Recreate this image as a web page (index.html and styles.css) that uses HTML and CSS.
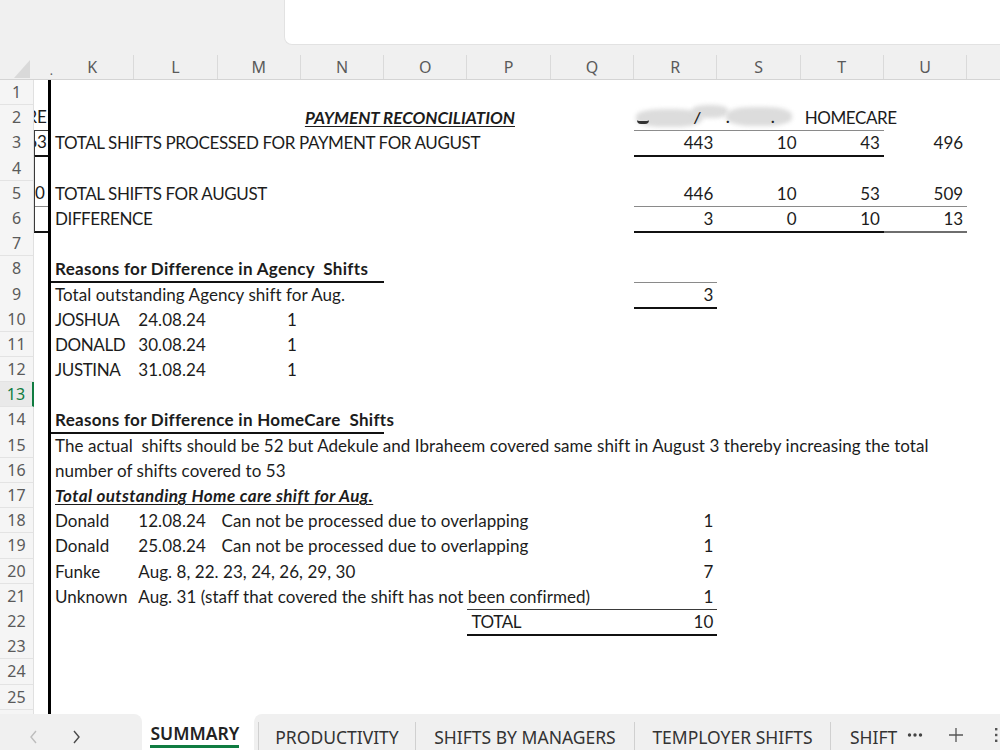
FILE: index.html
```html
<!DOCTYPE html>
<html lang="en">
<head>
    <meta charset="UTF-8">
    <title>SUMMARY - Payment Reconciliation</title>
    <link rel="stylesheet" href="styles.css">
</head>
<body>
    <div class="topbar">
        <div class="formula-box"></div>
    </div>

    <div class="colhead">
        <div class="corner">
            <svg width="34" height="24" viewBox="0 0 34 24"><polygon points="30,5 30,23 14,23" fill="#d9d9d9"/></svg>
        </div>
        <div class="ch ch-j"><span class="ch-dot">.</span></div>
        <div class="ch">K</div>
        <div class="ch">L</div>
        <div class="ch">M</div>
        <div class="ch">N</div>
        <div class="ch">O</div>
        <div class="ch">P</div>
        <div class="ch">Q</div>
        <div class="ch">R</div>
        <div class="ch">S</div>
        <div class="ch">T</div>
        <div class="ch">U</div>
        <div class="ch"></div>
    </div>

    <div class="sheet">
        <div class="row"><div class="rh">1</div><div class="c j"></div></div>
        <div class="row">
            <div class="rh">2</div>
            <div class="c j j-text bl-dark">RE</div>
            <div class="c n bold-title italic underline">PAYMENT RECONCILIATION</div>
            <div class="c r b-thin">
                <div class="smudge smudge-a"></div>
                <div class="smudge smudge-b"></div>
                <div class="smudge smudge-c"></div>
                <span class="ink ink-1"></span>
                <span class="ink ink-2">/</span>
                <span class="ink ink-3">.</span>
                <span class="ink ink-4">.</span>
            </div>
            <div class="c s b-thin"></div>
            <div class="c t caps b-thin">HOMECARE</div>
        </div>
        <div class="row">
            <div class="rh">3</div>
            <div class="c j j-text j-left b-black">63</div>
            <div class="c k caps">TOTAL SHIFTS PROCESSED FOR PAYMENT FOR AUGUST</div>
            <div class="c r num b-black">443</div>
            <div class="c s num b-black">10</div>
            <div class="c t num b-black">43</div>
            <div class="c u num">496</div>
        </div>
        <div class="row"><div class="rh">4</div><div class="c j j-left"></div></div>
        <div class="row">
            <div class="rh">5</div>
            <div class="c j j-text j-left b-thin">0</div>
            <div class="c k caps">TOTAL SHIFTS FOR AUGUST</div>
            <div class="c r num b-thin">446</div>
            <div class="c s num b-thin">10</div>
            <div class="c t num b-thin">53</div>
            <div class="c u num b-thin">509</div>
        </div>
        <div class="row">
            <div class="rh">6</div>
            <div class="c j j-left b-black"></div>
            <div class="c k caps">DIFFERENCE</div>
            <div class="c r num b-black">3</div>
            <div class="c s num b-black">0</div>
            <div class="c t num b-black">10</div>
            <div class="c u num b-grey">13</div>
        </div>
        <div class="row"><div class="rh">7</div><div class="c j"></div></div>
        <div class="row">
            <div class="rh">8</div>
            <div class="c j"></div>
            <div class="c k bold b-black">Reasons for Difference in Agency&nbsp; Shifts</div>
            <div class="c l b-black"></div>
            <div class="c m b-black"></div>
            <div class="c n b-black"></div>
            <div class="c r b-thin"></div>
        </div>
        <div class="row">
            <div class="rh">9</div>
            <div class="c j"></div>
            <div class="c k">Total outstanding Agency shift for Aug.</div>
            <div class="c r num b-black">3</div>
        </div>
        <div class="row">
            <div class="rh">10</div>
            <div class="c j"></div>
            <div class="c k caps">JOSHUA</div>
            <div class="c l">24.08.24</div>
            <div class="c m num">1</div>
        </div>
        <div class="row">
            <div class="rh">11</div>
            <div class="c j"></div>
            <div class="c k caps">DONALD</div>
            <div class="c l">30.08.24</div>
            <div class="c m num">1</div>
        </div>
        <div class="row">
            <div class="rh">12</div>
            <div class="c j"></div>
            <div class="c k caps">JUSTINA</div>
            <div class="c l">31.08.24</div>
            <div class="c m num">1</div>
        </div>
        <div class="row"><div class="rh rh-active">13</div><div class="c j"></div></div>
        <div class="row">
            <div class="rh">14</div>
            <div class="c j"></div>
            <div class="c k bold b-black">Reasons for Difference in HomeCare&nbsp; Shifts</div>
            <div class="c l b-black"></div>
            <div class="c m b-black"></div>
            <div class="c n b-black"></div>
        </div>
        <div class="row">
            <div class="rh">15</div>
            <div class="c j"></div>
            <div class="c k">The actual&nbsp; shifts should be 52 but Adekule and Ibraheem covered same shift in August 3 thereby increasing the total</div>
        </div>
        <div class="row">
            <div class="rh">16</div>
            <div class="c j"></div>
            <div class="c k">number of shifts covered to 53</div>
        </div>
        <div class="row">
            <div class="rh">17</div>
            <div class="c j"></div>
            <div class="c k bold-title italic underline">Total outstanding Home care shift for Aug.</div>
        </div>
        <div class="row">
            <div class="rh">18</div>
            <div class="c j"></div>
            <div class="c k">Donald</div>
            <div class="c l">12.08.24</div>
            <div class="c m">Can not be processed due to overlapping</div>
            <div class="c r num">1</div>
        </div>
        <div class="row">
            <div class="rh">19</div>
            <div class="c j"></div>
            <div class="c k">Donald</div>
            <div class="c l">25.08.24</div>
            <div class="c m">Can not be processed due to overlapping</div>
            <div class="c r num">1</div>
        </div>
        <div class="row">
            <div class="rh">20</div>
            <div class="c j"></div>
            <div class="c k">Funke</div>
            <div class="c l">Aug. 8, 22. 23, 24, 26, 29, 30</div>
            <div class="c r num">7</div>
        </div>
        <div class="row">
            <div class="rh">21</div>
            <div class="c j"></div>
            <div class="c k">Unknown</div>
            <div class="c l">Aug. 31 (staff that covered the shift has not been confirmed)</div>
            <div class="c p b-dark"></div>
            <div class="c q b-dark"></div>
            <div class="c r num b-dark">1</div>
        </div>
        <div class="row">
            <div class="rh">22</div>
            <div class="c j"></div>
            <div class="c p caps b-black">TOTAL</div>
            <div class="c q b-black"></div>
            <div class="c r num b-black">10</div>
        </div>
        <div class="row"><div class="rh">23</div><div class="c j"></div></div>
        <div class="row"><div class="rh">24</div><div class="c j"></div></div>
        <div class="row"><div class="rh">25</div><div class="c j"></div></div>
        <div class="row"><div class="rh"></div><div class="c j"></div></div>
    </div>

    <div class="tabbar">
        <div class="tab-nav">
            <svg class="nav-icon" width="10" height="14" viewBox="0 0 10 14"><polyline points="7,1 2,7 7,13" fill="none" stroke="#bdbdbd" stroke-width="1.4"/></svg>
            <svg class="nav-icon" width="10" height="14" viewBox="0 0 10 14"><polyline points="3,1 8,7 3,13" fill="none" stroke="#4a4a4a" stroke-width="1.4"/></svg>
        </div>
        <div class="tab-active"><span class="tab-active-label">SUMMARY</span></div>
        <div class="tab-rest">
            <div class="tab tab-1">PRODUCTIVITY</div>
            <div class="tab tab-2">SHIFTS BY MANAGERS</div>
            <div class="tab tab-3">TEMPLOYER SHIFTS</div>
            <div class="tab tab-4">SHIFT</div>
            <svg class="tab-icon tab-more" width="16" height="6" viewBox="0 0 16 6"><circle cx="2.5" cy="3" r="1.7" fill="#444"/><circle cx="8" cy="3" r="1.7" fill="#444"/><circle cx="13.5" cy="3" r="1.7" fill="#444"/></svg>
            <svg class="tab-icon tab-add" width="16" height="16" viewBox="0 0 16 16"><path d="M8 1v14M1 8h14" stroke="#555" stroke-width="1.3"/></svg>
            <svg class="tab-icon tab-menu" width="6" height="16" viewBox="0 0 6 16"><rect x="1" y="1" width="2.4" height="2.4" fill="#555"/><rect x="1" y="6.8" width="2.4" height="2.4" fill="#555"/><rect x="1" y="12.6" width="2.4" height="2.4" fill="#555"/></svg>
        </div>
    </div>
</body>
</html>
```

FILE: styles.css
```css
:root {
    --chrome: #f0f0f0;
    --header-text: #5a5a5a;
    --cell-text: #1c1c1c;
    --green: #107c41;
    --line-thin: #8a8a8a;
    --line-dark: #3a3a3a;
    --line-black: #111;
}

*,
*::before,
*::after {
    box-sizing: border-box;
    padding: 0;
    margin: 0;
}

body {
    width: 1000px;
    height: 750px;
    overflow: hidden;
    background-color: #fff;
    color: var(--cell-text);
    font-family: 'Lato', sans-serif;
}

/* top area */

.topbar {
    height: 45px;
    padding-left: 284px;
    background-color: var(--chrome);
}

.formula-box {
    height: 100%;
    background-color: #fff;
    border-left: 1px solid #e2e2e2;
    border-bottom: 1px solid #e2e2e2;
    border-bottom-left-radius: 8px;
}

/* column headers */

.colhead {
    display: grid;
    grid-template-columns: 34px 17px repeat(12, 83.3px);
    width: 1000px;
    overflow: hidden;
    height: 35px;
    padding-top: 10px;
    background-color: var(--chrome);
    border-bottom: 1px solid #d4d4d4;
    font-family: 'Noto Sans', sans-serif;
    font-size: 16px;
    color: var(--header-text);
}

.corner svg {
    display: block;
}

.ch {
    display: flex;
    align-items: center;
    justify-content: center;
    border-right: 1px solid #dadada;
}

.ch-j {
    justify-content: flex-end;
    border-right: none;
}

.ch-dot {
    font-size: 12px;
    margin-right: -2px;
    margin-top: 6px;
}

/* sheet */

.sheet {
    width: 1000px;
    height: 634px;
    overflow: hidden;
}

.row {
    display: grid;
    grid-template-columns: 34px 17px repeat(12, 83.3px);
    height: 25.2px;
}

.rh {
    grid-column: 1;
    grid-row: 1;
    background-color: #f5f5f5;
    border-bottom: 1px solid #e3e3e3;
    border-right: 1px solid #e0e0e0;
    text-align: center;
    font-family: 'Noto Sans', sans-serif;
    font-size: 16px;
    line-height: 24px;
    color: var(--header-text);
}

.rh-active {
    color: var(--green);
    border-right: 2px solid var(--green);
    background-color: #e9e9e9;
}

.c {
    grid-row: 1;
    padding: 1px 4px 0;
    white-space: nowrap;
    font-size: 17px;
    line-height: 24px;
    letter-spacing: 0.05px;
}

.num {
    text-align: right;
}

.caps {
    letter-spacing: -0.4px;
}

.j {
    grid-column: 2;
    padding: 0;
    border-right: 3px solid #000;
}

.j-text {
    overflow: hidden;
    direction: rtl;
    text-align: left;
    padding-right: 1px;
}

.j-left {
    border-left: 1px solid var(--line-dark);
}

.k { grid-column: 3; }
.l { grid-column: 4; }
.m { grid-column: 5; }
.n { grid-column: 6; }
.p { grid-column: 8; }
.q { grid-column: 9; }
.r { grid-column: 10; position: relative; }
.s { grid-column: 11; }
.t { grid-column: 12; }
.u { grid-column: 13; }

.bold {
    font-weight: 700;
    letter-spacing: 0.3px;
}

.bold-title {
    font-weight: 700;
    letter-spacing: 0.4px;
}

.n.bold-title {
    letter-spacing: 0;
}

.italic {
    font-style: italic;
}

.underline {
    text-decoration: underline;
    text-decoration-thickness: 1px;
    text-underline-offset: 2px;
}

.b-thin {
    border-bottom: 1px solid var(--line-thin);
}

.bl-dark {
    border-bottom: 1px solid var(--line-dark);
}

.b-dark {
    border-bottom: 1px solid var(--line-dark);
}

.b-black {
    border-bottom: 2px solid var(--line-black);
}

.b-grey {
    border-bottom: 2px solid #6e6e6e;
}

/* redacted header names in R and S */

.smudge {
    position: absolute;
    background-color: #dcdcdc;
    filter: blur(2px);
    border-radius: 40%;
}

.smudge-a {
    left: 2px;
    top: 4px;
    width: 66px;
    height: 18px;
}

.smudge-b {
    left: 58px;
    top: 0;
    width: 36px;
    height: 13px;
}

.smudge-c {
    left: 92px;
    top: 2px;
    width: 66px;
    height: 19px;
}

.ink {
    position: absolute;
    color: #222;
    font-size: 15px;
    font-weight: 700;
}

.ink-1 {
    left: 3px;
    top: 15px;
    width: 12px;
    height: 4px;
    border-bottom: 3px solid #333;
    border-radius: 0 0 6px 6px;
}

.ink-2 {
    left: 60px;
    top: 0;
    font-style: italic;
}

.ink-3 {
    left: 92px;
    top: 0;
}

.ink-4 {
    left: 137px;
    top: 0;
}

/* sheet tabs */

.tabbar {
    display: flex;
    height: 36px;
    font-family: 'Noto Sans', sans-serif;
    font-size: 17.5px;
    color: #333;
}

.tab-nav {
    display: flex;
    align-items: center;
    gap: 32px;
    width: 143px;
    padding-left: 29px;
    padding-top: 10px;
    background-color: var(--chrome);
    border-top-right-radius: 8px;
}

.nav-icon {
    display: block;
}

.tab-active {
    width: 112px;
    padding-left: 8px;
    padding-top: 7px;
}

.tab-active-label {
    display: inline-block;
    font-weight: 600;
    color: #222;
    padding-bottom: 1px;
    border-bottom: 3px solid var(--green);
    line-height: 22px;
}

.tab-rest {
    display: flex;
    flex: 1;
    align-items: flex-end;
    padding-left: 4px;
    background-color: var(--chrome);
    border-top-left-radius: 8px;
}

.tab {
    height: 28px;
    padding-top: 2px;
    line-height: 26px;
    text-align: center;
    border-left: 1px solid #d0d0d0;
    white-space: nowrap;
}

.tab-1 { width: 157px; }
.tab-2 { width: 219px; }
.tab-3 { width: 196px; }

.tab-4 {
    width: 77px;
    padding-left: 19px;
    text-align: left;
}

.tab-icon {
    display: block;
    flex-shrink: 0;
}

.tab-more {
    margin-bottom: 12px;
}

.tab-add {
    margin-left: 25px;
    margin-bottom: 7px;
}

.tab-menu {
    margin-left: 30px;
    margin-bottom: 7px;
}
```
